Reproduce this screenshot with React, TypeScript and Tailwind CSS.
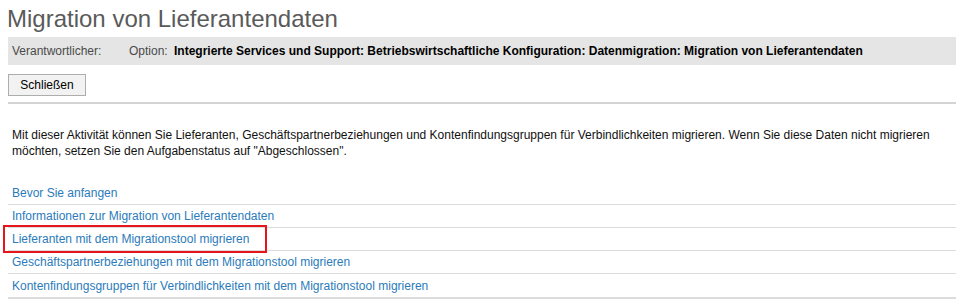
const links = [
  "Bevor Sie anfangen",
  "Informationen zur Migration von Lieferantendaten",
  "Lieferanten mit dem Migrationstool migrieren",
  "Geschäftspartnerbeziehungen mit dem Migrationstool migrieren",
  "Kontenfindungsgruppen für Verbindlichkeiten mit dem Migrationstool migrieren",
]

export default function App() {
  return (
    <div className="w-[960px] h-[302px] overflow-hidden bg-white pl-2 pr-1 font-['Liberation_Sans',Arial,sans-serif]">
      <h1 className="pt-[5px] -ml-px text-[24px] leading-[28px] text-[#5a5a5a]">
        Migration von Lieferantendaten
      </h1>

      {/* Verantwortlich / Option Leiste */}
      <div className="mt-[4px] h-[28px] bg-[#e5e5e5] flex items-center px-1 text-[12px]">
        <span className="w-[117px] text-[#4a4a4a]">Verantwortlicher:</span>
        <span className="w-[45px] text-[#4a4a4a]">Option:</span>
        <span className="font-bold text-black">
          Integrierte Services und Support: Betriebswirtschaftliche Konfiguration: Datenmigration: Migration von Lieferantendaten
        </span>
      </div>

      <button className="mt-[9px] w-[78px] h-[22px] bg-[#f2f2f2] border border-[#adadad] text-[12px] text-black">
        Schließen
      </button>

      <div className="mt-[6px] h-[2px] bg-[#d4d4d4]" />

      <p className="mt-[23px] px-1 text-[12px] leading-[16px] text-[#111]">
        Mit dieser Aktivität können Sie Lieferanten, Geschäftspartnerbeziehungen und Kontenfindungsgruppen für Verbindlichkeiten migrieren. Wenn Sie diese Daten nicht migrieren möchten, setzen Sie den Aufgabenstatus auf "Abgeschlossen".
      </p>

      <div className="mt-[23px] border-b-2 border-[#dcdcdc]">
        {links.map((link, i) => (
          <div
            key={link}
            className="relative h-[23px] flex items-center pl-1 border-b border-[#dcdcdc] last:border-b-0 text-[12px] text-[#2b7bbb]"
          >
            <a href="#">{link}</a>
            {i === 2 && (
              <div className="absolute left-[-5px] top-[-3px] w-[264px] h-[28px] border-2 border-[#e8141b]" />
            )}
          </div>
        ))}
      </div>
    </div>
  )
}
